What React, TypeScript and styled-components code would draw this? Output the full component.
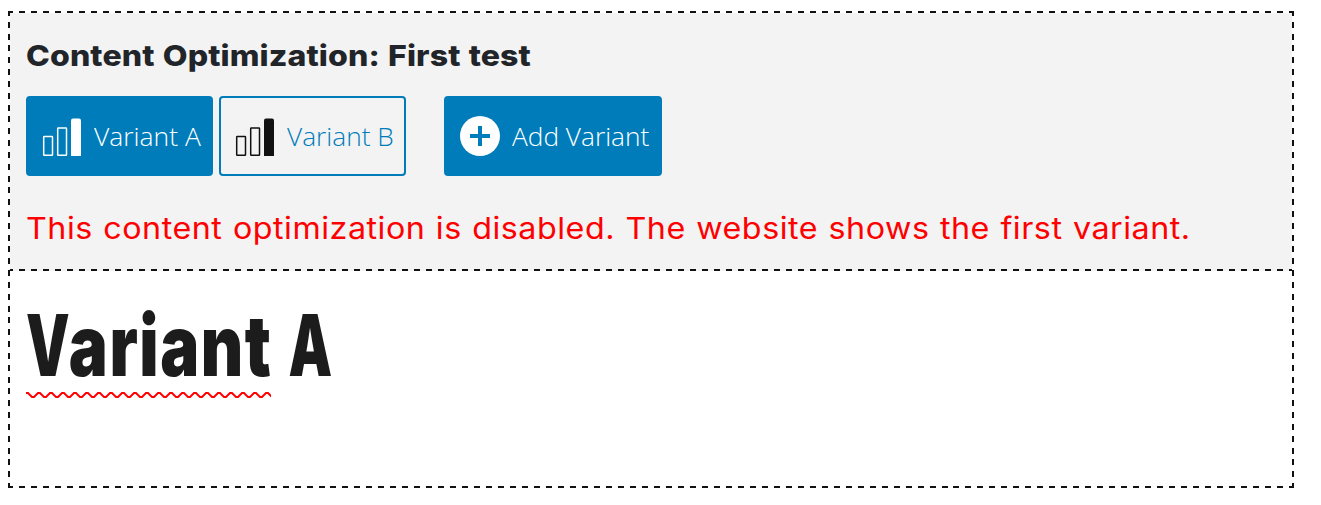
import React from "react";
import styled, { createGlobalStyle } from "styled-components";

const GlobalStyle = createGlobalStyle`
  * { box-sizing: border-box; }
  body { margin: 0; background: #fff; }
`;

const dashX = "repeating-linear-gradient(90deg, #111 0 5px, transparent 5px 10.981px, #111 10.981px 11.981px)";
const dashY = "repeating-linear-gradient(180deg, #111 0 5px, transparent 5px 10.825px, #111 10.825px 11.825px)";
const dashInner = "repeating-linear-gradient(90deg, #111 0 3px, transparent 3px 8.981px, #111 8.981px 11.981px)";

const Frame = styled.section`
  width: 1286px;
  height: 477px;
  margin: 11px 0 0 8px;
  padding: 2px;
  background:
    ${dashX} 0 0 / 100% 2px no-repeat,
    ${dashX} 0 100% / 100% 2px no-repeat,
    ${dashY} 0 0 / 2px 100% no-repeat,
    ${dashY} 100% 0 / 2px 100% no-repeat,
    #fff;
`;

const Header = styled.header`
  height: 258px;
  padding: 23px 16px 0;
  background: ${dashInner} 0 100% / 100% 2px no-repeat, #f3f3f3;
`;

const Fitted = styled.span<{ $stretch: number }>`
  display: inline-block;
  white-space: nowrap;
  transform: scaleX(${(p) => p.$stretch});
  transform-origin: 0 50%;
`;

const Title = styled.h2`
  margin: 0;
  height: 40px;
  font: 800 29px/40px Inter, sans-serif;
  letter-spacing: 0.1px;
  word-spacing: 1px;
  color: #212529;
`;

const Toolbar = styled.div`
  display: flex;
  gap: 6px;
  margin-top: 20px;
`;

const Button = styled.button<{ $outline?: boolean; $width: number; $offset?: number }>`
  display: flex;
  align-items: center;
  width: ${(p) => p.$width}px;
  height: 80px;
  margin: 0 0 0 ${(p) => p.$offset ?? 0}px;
  padding: 0 0 0 14px;
  border: 2px solid #007cba;
  border-radius: 4px;
  background: ${(p) => (p.$outline ? "transparent" : "#007cba")};
  color: ${(p) => (p.$outline ? "#007cba" : "#fff")};
  font: 300 26px/40px "Open Sans", sans-serif;

  svg { flex: none; margin-right: 12px; }
`;

const Notice = styled.p`
  margin: 32px 0 0;
  height: 40px;
  font: 400 30px/40px Inter, sans-serif;
  letter-spacing: 0.49px;
  word-spacing: 0.8px;
  color: #f00;
`;

const Content = styled.main`
  padding: 32px 16px 0;
`;

const Heading = styled.h1`
  margin: 0;
  height: 86px;
  font: 900 85px/86px Inter, sans-serif;
  letter-spacing: 2px;
  word-spacing: 2px;
  color: #1c1c1c;
`;

const Capital = styled.span`
  display: inline-block;
  margin-right: -14px;
  transform: scaleX(0.84);
  transform-origin: 0 50%;
`;

const Squiggle = styled.svg`
  display: block;
  margin-top: 3px;
`;

function BarsIcon({ color }: { color: string }) {
  return (
    <svg width="40" height="40" viewBox="0 0 40 40" fill="none" stroke={color} strokeWidth="1.5">
      <rect x="1.7" y="20.5" width="8.8" height="18.8" rx="0.6" />
      <rect x="15.7" y="11.9" width="8.8" height="27.4" rx="0.6" />
      <path d="M29 40V4.4Q29 2.5 31 2.5H37Q39 2.5 39 4.4V40Z" fill={color} stroke="none" />
    </svg>
  );
}

function PlusIcon() {
  return (
    <svg width="40" height="40" viewBox="0 0 40 40">
      <circle cx="20" cy="20" r="20" fill="#fff" />
      <path d="M20 10V30M10 20H30" stroke="#007cba" strokeWidth="4" />
    </svg>
  );
}

const waves =
  "M0 1H2" +
  Array.from({ length: 21 }, (_, i) => `L${i * 12 + 6} 5H${i * 12 + 8}L${i * 12 + 12} 1H${i * 12 + 14}`).join("");

export default function App() {
  return (
    <>
      <GlobalStyle />
      <Frame>
        <Header>
          <Title><Fitted $stretch={1.105}>Content Optimization: First test</Fitted></Title>
          <Toolbar>
            <Button $width={187}><BarsIcon color="#fff" /><Fitted $stretch={1.018}>Variant A</Fitted></Button>
            <Button $width={187} $outline><BarsIcon color="#111" /><Fitted $stretch={1.01}>Variant B</Fitted></Button>
            <Button $width={218} $offset={32}><PlusIcon /><Fitted $stretch={1.01}>Add Variant</Fitted></Button>
          </Toolbar>
          <Notice><Fitted $stretch={1.075}>This content optimization is disabled. The website shows the first variant.</Fitted></Notice>
        </Header>
        <Content>
          <Heading><Fitted $stretch={0.77}><Capital>V</Capital>ariant <Capital>A</Capital></Fitted></Heading>
          <Squiggle width="245" height="8" viewBox="0 0 245 8" fill="none" stroke="#f00" strokeWidth="2"><path d={waves} /></Squiggle>
        </Content>
      </Frame>
    </>
  );
}
